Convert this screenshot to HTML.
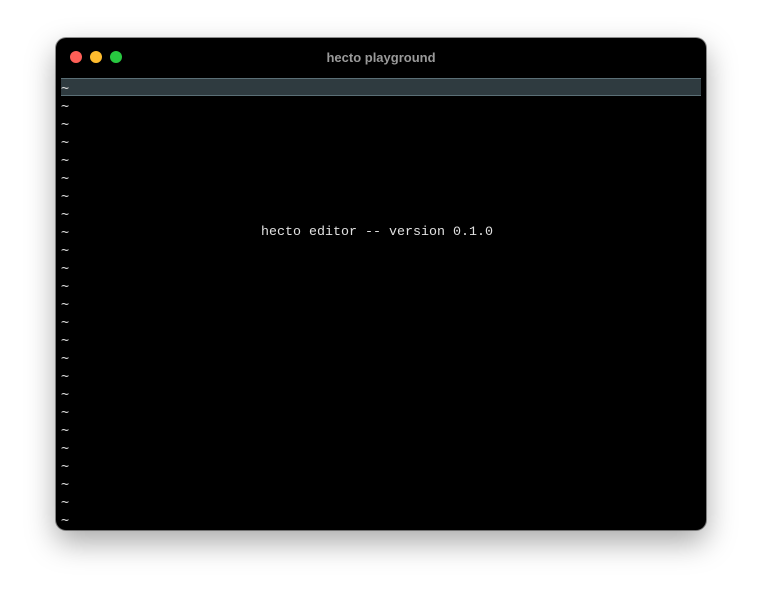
<!DOCTYPE html>
<html><head><meta charset="utf-8"><style>
html,body{margin:0;padding:0;background:#fff;width:762px;height:604px;overflow:hidden}
.win{position:absolute;left:56px;top:38px;width:650px;height:492px;background:#000;border-radius:10px;box-shadow:0 12px 30px rgba(0,0,0,0.35),0 0 0 1px rgba(0,0,0,0.4);overflow:hidden}
.dot{position:absolute;top:13px;width:12px;height:12px;border-radius:50%}
.title{position:absolute;top:12px;left:0;width:650px;text-align:center;font:bold 13px "Liberation Sans",sans-serif;color:#9a9a9a}
.hl{position:absolute;left:5px;top:40px;width:640px;height:16px;background:#2f3b40;border-top:1px solid #5b6f76;border-bottom:1px solid #5b6f76}
.rows{position:absolute;left:5px;top:42px;font:13.33px/18px "DejaVu Sans Mono",monospace;color:#e0e0e0;white-space:pre}
.ver{position:absolute;left:205px;top:186px;font:13.33px/18px "Liberation Mono",monospace;color:#e0e0e0;white-space:pre}
</style></head><body>
<div class="win">
<div class="dot" style="left:14px;background:#fe5f57"></div>
<div class="dot" style="left:34px;background:#febc2e"></div>
<div class="dot" style="left:54px;background:#28c840"></div>
<div class="title">hecto playground</div>
<div class="hl"></div>
<div class="rows">~
~
~
~
~
~
~
~
~
~
~
~
~
~
~
~
~
~
~
~
~
~
~
~
~</div>
<div class="ver">hecto editor -- version 0.1.0</div>
</div>
</body></html>
